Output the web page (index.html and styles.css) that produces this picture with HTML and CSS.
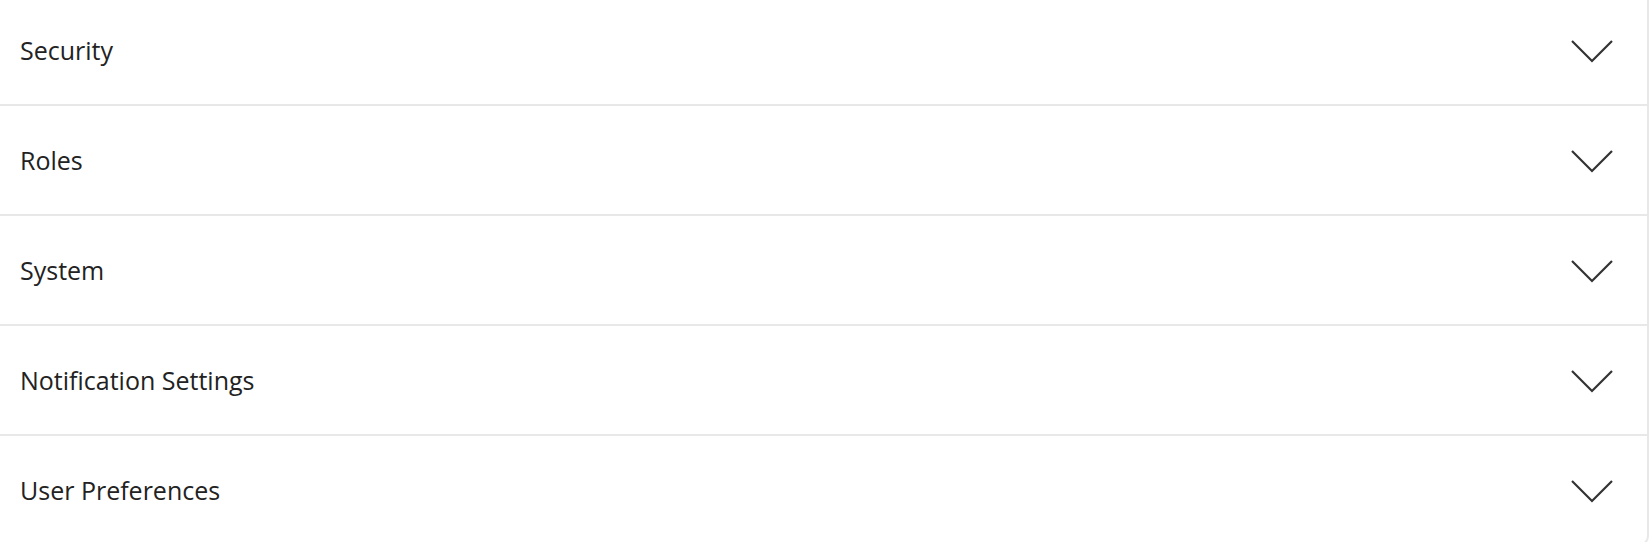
FILE: index.html
```html
<!DOCTYPE html>
<html>
<head>
<meta charset="utf-8">
<link rel="stylesheet" href="styles.css">
</head>
<body>
<div class="card">
  <div class="row"><span class="label">Security</span><svg class="chev" viewBox="0 0 42 26"><polyline points="1,1 21,21 41,1"/></svg></div>
  <div class="row"><span class="label">Roles</span><svg class="chev" viewBox="0 0 42 26"><polyline points="1,1 21,21 41,1"/></svg></div>
  <div class="row"><span class="label">System</span><svg class="chev" viewBox="0 0 42 26"><polyline points="1,1 21,21 41,1"/></svg></div>
  <div class="row"><span class="label">Notification Settings</span><svg class="chev" viewBox="0 0 42 26"><polyline points="1,1 21,21 41,1"/></svg></div>
  <div class="row"><span class="label">User Preferences</span><svg class="chev" viewBox="0 0 42 26"><polyline points="1,1 21,21 41,1"/></svg></div>
</div>
</body>
</html>
```
FILE: styles.css
```css
html, body {
  margin: 0;
  padding: 0;
  background: #ffffff;
  overflow: hidden;
}
.card {
  margin-top: -4px;
  width: 1647px;
  border-right: 2px solid #e8e8e8;
  border-bottom: 2px solid #e8e8e8;
  border-bottom-right-radius: 10px;
  background: #ffffff;
  font-family: "Open Sans", "Noto Sans", sans-serif;
}
.row {
  height: 108px;
  display: flex;
  align-items: center;
  justify-content: space-between;
  padding: 0 34px 0 20px;
  border-bottom: 2px solid #e8e8e8;
}
.row:last-child {
  border-bottom: none;
}
.label {
  font-size: 25px;
  color: #222222;
  line-height: 1;
}
.chev {
  width: 42px;
  height: 26px;
  margin-top: 6px;
  fill: none;
  stroke: #333333;
  stroke-width: 2.2;
}
```
